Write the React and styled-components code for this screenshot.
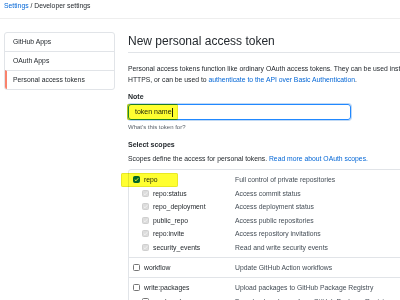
import React from "react";
import styled, { createGlobalStyle } from "styled-components";

const Global = createGlobalStyle`
  html, body { margin: 0; padding: 0; background: #fff; overflow: hidden; }
  body { font-family: "Liberation Sans", Arial, sans-serif; color: #24292e; width: 400px; height: 300px; }
`;

const Page = styled.div`
  width: 400px;
  height: 300px;
  overflow: hidden;
  position: relative;
`;

const Header = styled.div`
  height: 18px;
  border-bottom: 1px solid #eeeeee;
  padding-left: 4px;
  font-size: 6.8px;
  line-height: 12px;
  white-space: nowrap;
  color: #24292e;
`;

const Link = styled.a`
  color: #0366d6;
  text-decoration: none;
`;

const Layout = styled.div`
  display: flex;
  padding-top: 13px;
  padding-left: 4px;
`;

const Sidebar = styled.nav`
  flex: 0 0 111px;
  box-sizing: border-box;
  align-self: flex-start;
  border: 1px solid #e1e4e8;
  border-radius: 3px;
  overflow: hidden;
`;

const NavItem = styled.div`
  height: 18px;
  line-height: 18px;
  font-size: 6.8px;
  padding-left: ${(p) => (p.$active ? "6px" : "8px")};
  border-left: ${(p) => (p.$active ? "2px solid #f9826c" : "none")};
  border-top: ${(p) => (p.$first ? "none" : "1px solid #e1e4e8")};
  white-space: nowrap;
  color: #24292e;
`;

const Main = styled.main`
  flex: 0 0 600px;
  margin-left: 13px;
`;

const Title = styled.h1`
  margin: 1px 0 0;
  font-size: 12px;
  line-height: 16px;
  font-weight: 400;
  padding-bottom: 3px;
  border-bottom: 1px solid #e1e4e8;
  white-space: nowrap;
`;

const Para = styled.p`
  margin: 9.5px 0 0;
  font-size: 6.8px;
  line-height: 11px;
  white-space: nowrap;
`;

const Label = styled.div`
  margin-top: ${(p) => p.$mt || 0}px;
  font-size: 7px;
  font-weight: 700;
  line-height: 10px;
`;

const InputWrap = styled.div`
  position: relative;
  margin-top: 2px;
  width: 223px;
  height: 16px;
  box-sizing: border-box;
  border: 1px solid #2188ff;
  border-radius: 3px;
  box-shadow: 0 0 0 1px rgba(3, 102, 214, 0.25);
  padding-left: 6px;
  font-size: 7px;
  line-height: 14px;
  display: flex;
  align-items: center;
`;

const Caret = styled.span`
  display: inline-block;
  width: 0;
  height: 9px;
  border-left: 1px solid #24292e;
  margin-left: 0.5px;
`;

const Highlight = styled.span`
  position: absolute;
  left: ${(p) => p.$x}px;
  top: ${(p) => p.$y}px;
  width: ${(p) => p.$w}px;
  height: ${(p) => p.$h}px;
  background: #ffff30;
  mix-blend-mode: multiply;
  border-radius: 2px;
  box-shadow: inset 0 0 0 0.5px rgba(170, 170, 0, 0.5);
  pointer-events: none;
`;

const Hint = styled.div`
  margin-top: 2.5px;
  font-size: 6px;
  line-height: 9px;
  color: #586069;
`;

const Desc = styled.div`
  margin-top: 4px;
  font-size: 6.8px;
  line-height: 10px;
  white-space: nowrap;
`;

const ScopeBox = styled.div`
  margin-top: 5px;
  border: 1px solid #e1e4e8;
  border-radius: 3px;
`;

const Group = styled.div`
  padding: 2.8px 0;
  border-top: ${(p) => (p.$first ? "none" : "1px solid #e1e4e8")};
`;

const Row = styled.div`
  display: flex;
  align-items: center;
  height: 13.6px;
  font-size: 6.8px;
  white-space: nowrap;
`;

const Name = styled.div`
  flex: 0 0 106px;
  box-sizing: border-box;
  display: flex;
  align-items: center;
  gap: 4px;
  padding-left: ${(p) => (p.$sub ? "13px" : "4px")};
  color: #24292e;
`;

const Text = styled.div`
  color: #444d56;
`;

const Box = styled.span`
  flex: 0 0 auto;
  width: 7px;
  height: 7px;
  box-sizing: border-box;
  border-radius: 1.5px;
  display: flex;
  align-items: center;
  justify-content: center;
  ${(p) =>
    p.$state === "checked"
      ? "background:#0366d6;border:1px solid #0366d6;"
      : p.$state === "disabled"
      ? "background:#dcdcdc;border:1px solid #cfcfcf;"
      : "background:#fff;border:1px solid #767676;"}
`;

const Check = ({ color }) => (
  <svg width="5" height="5" viewBox="0 0 10 10">
    <path d="M1.5 5.2 L4 7.6 L8.6 2.4" fill="none" stroke={color} strokeWidth="1.8" />
  </svg>
);

function Checkbox({ state }) {
  return (
    <Box $state={state}>
      {state === "checked" && <Check color="#fff" />}
      {state === "disabled" && <Check color="#f4f4f4" />}
    </Box>
  );
}

const repoSubs = [
  ["repo:status", "Access commit status"],
  ["repo_deployment", "Access deployment status"],
  ["public_repo", "Access public repositories"],
  ["repo:invite", "Access repository invitations"],
  ["security_events", "Read and write security events"],
];

export default function App() {
  return (
    <Page>
      <Global />
      <Header>
        <Link>Settings</Link> / Developer settings
      </Header>
      <Layout>
        <Sidebar>
          <NavItem $first>GitHub Apps</NavItem>
          <NavItem>OAuth Apps</NavItem>
          <NavItem $active>Personal access tokens</NavItem>
        </Sidebar>
        <Main>
          <Title>New personal access token</Title>
          <Para>
            Personal access tokens function like ordinary OAuth access tokens. They can be used instead of a password for Git over
            <br />
            HTTPS, or can be used to <Link>authenticate to the API over Basic Authentication</Link>.
          </Para>
          <Label $mt={7.5}>Note</Label>
          <InputWrap>
            token name<Caret />
          </InputWrap>
          <Hint>What's this token for?</Hint>
          <Label $mt={8.5}>Select scopes</Label>
          <Desc>
            Scopes define the access for personal tokens. <Link>Read more about OAuth scopes.</Link>
          </Desc>
          <ScopeBox>
            <Group $first>
              <Row>
                <Name>
                  <Checkbox state="checked" />
                  repo
                </Name>
                <Text>Full control of private repositories</Text>
              </Row>
              {repoSubs.map(([n, d]) => (
                <Row key={n}>
                  <Name $sub>
                    <Checkbox state="disabled" />
                    {n}
                  </Name>
                  <Text>{d}</Text>
                </Row>
              ))}
            </Group>
            <Group>
              <Row>
                <Name>
                  <Checkbox state="off" />
                  workflow
                </Name>
                <Text>Update GitHub Action workflows</Text>
              </Row>
            </Group>
            <Group>
              <Row>
                <Name>
                  <Checkbox state="off" />
                  write:packages
                </Name>
                <Text>Upload packages to GitHub Package Registry</Text>
              </Row>
              <Row>
                <Name $sub>
                  <Checkbox state="off" />
                  read:packages
                </Name>
                <Text>Download packages from GitHub Package Registry</Text>
              </Row>
            </Group>
          </ScopeBox>
        </Main>
      </Layout>
      <Highlight $x={127} $y={104} $w={51} $h={16} />
      <Highlight $x={121} $y={173} $w={57} $h={14} />
    </Page>
  );
}
